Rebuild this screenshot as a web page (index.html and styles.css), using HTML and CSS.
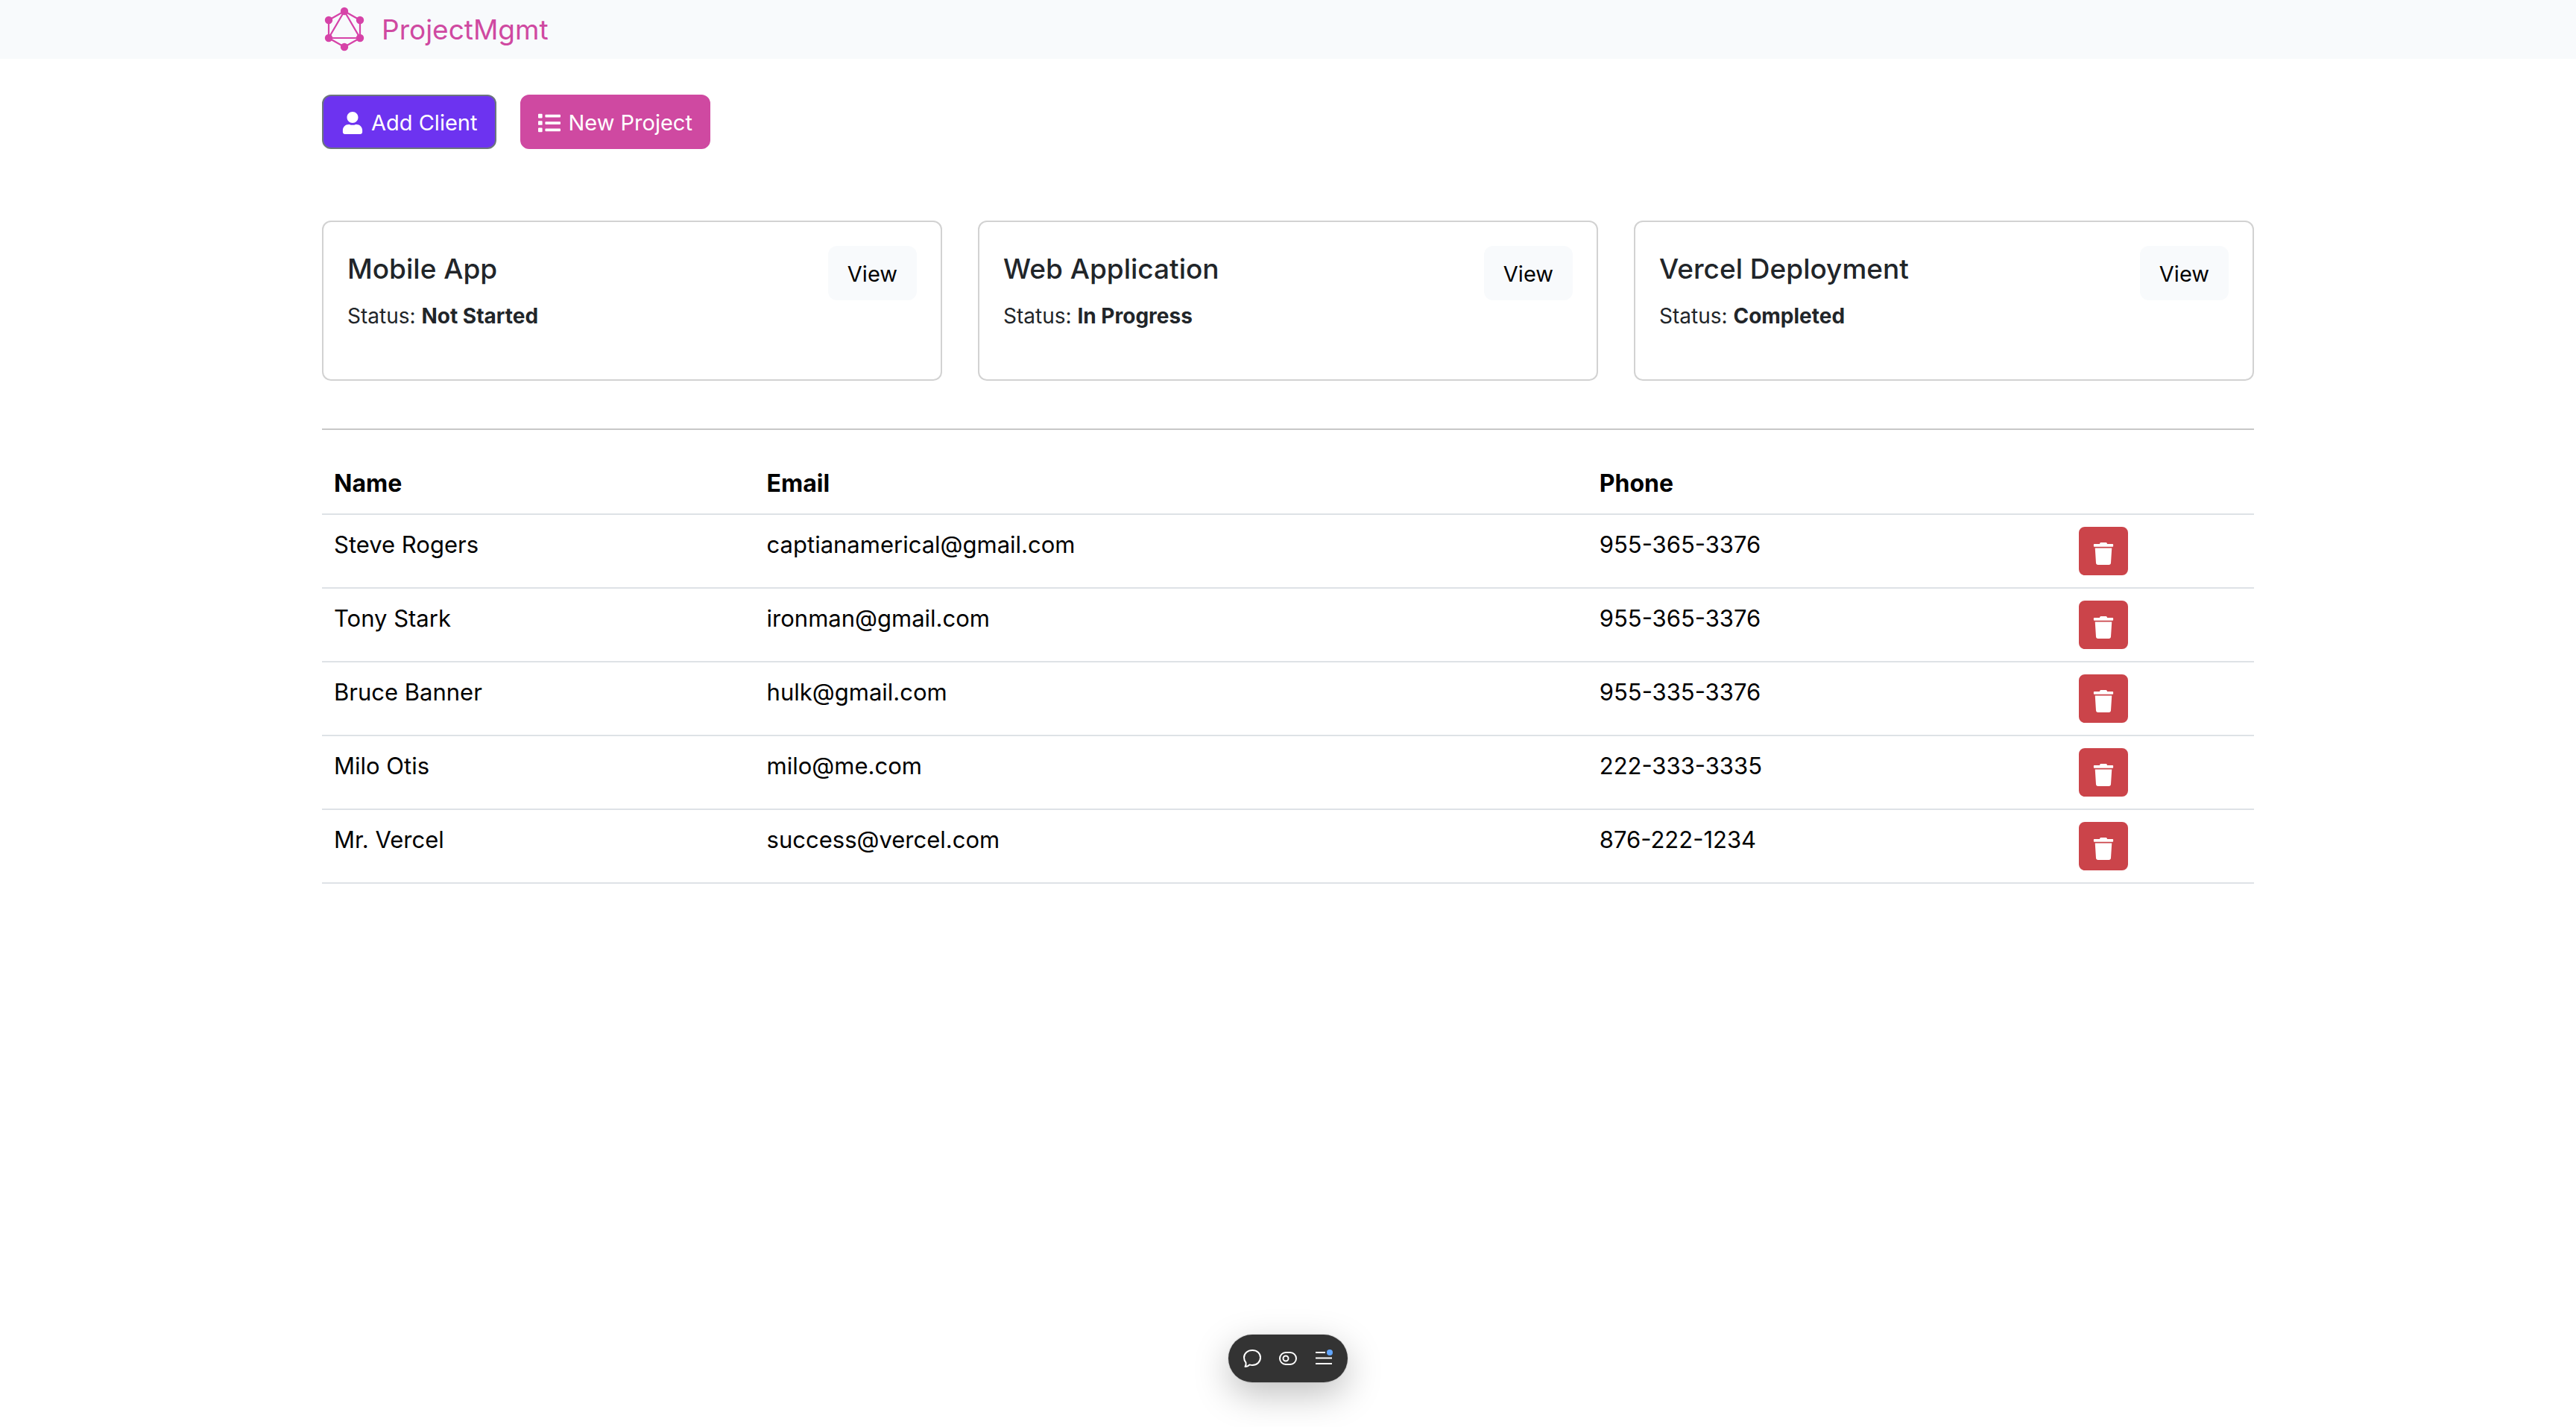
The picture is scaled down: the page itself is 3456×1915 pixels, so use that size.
FILE: index.html
```
<!DOCTYPE html>
<html lang="en">
<head>
<meta charset="utf-8">
<meta name="viewport" content="width=device-width, initial-scale=1">
<title>ProjectMgmt</title>
<link rel="stylesheet" href="styles.css">
</head>
<body>
<svg class="sprite" aria-hidden="true">
  <symbol id="icon-trash" viewBox="0 0 448 512"><path d="M432 32H312l-9.400-18.700A24 24 0 0 0 281.100 0H166.800a23.720 23.720 0 0 0-21.400 13.300L136 32H16A16 16 0 0 0 0 48v32a16 16 0 0 0 16 16h416a16 16 0 0 0 16-16V48a16 16 0 0 0-16-16zM53.200 467a48 48 0 0 0 47.900 45h245.800a48 48 0 0 0 47.900-45L416 128H32z"/></symbol>
</svg>

<nav class="navbar">
  <div class="container">
    <a class="brand" href="#">
      <svg class="brand-logo" viewBox="0 0 60 64" aria-hidden="true">
        <path d="M30 7 51 19V43L30 55 9 43V19ZM30 7 9 43H51Z" fill="none" stroke="currentColor" stroke-width="2.200"/>
        <g fill="currentColor"><circle cx="30" cy="7" r="5.200"/><circle cx="51" cy="19" r="5.200"/><circle cx="51" cy="43" r="5.200"/><circle cx="30" cy="55" r="5.200"/><circle cx="9" cy="43" r="5.200"/><circle cx="9" cy="19" r="5.200"/></g>
      </svg>
      <span>ProjectMgmt</span>
    </a>
  </div>
</nav>

<main class="container content">
  <div class="actions">
    <button class="btn btn-client" type="button">
      <svg class="icon" viewBox="0 0 448 512" aria-hidden="true"><path d="M224 256c70.700 0 128-57.300 128-128S294.700 0 224 0 96 57.300 96 128s57.300 128 128 128zm89.600 32h-16.700c-22.200 10.200-46.900 16-72.900 16s-50.600-5.800-72.900-16h-16.700C60.200 288 0 348.200 0 422.400V464c0 26.500 21.500 48 48 48h352c26.500 0 48-21.500 48-48v-41.600c0-74.200-60.200-134.400-134.400-134.400z"/></svg>
      <span>Add Client</span>
    </button>
    <button class="btn btn-project" type="button">
      <svg class="icon" viewBox="0 0 512 512" aria-hidden="true"><path d="M80 368H16a16 16 0 0 0-16 16v64a16 16 0 0 0 16 16h64a16 16 0 0 0 16-16v-64a16 16 0 0 0-16-16zm0-320H16A16 16 0 0 0 0 64v64a16 16 0 0 0 16 16h64a16 16 0 0 0 16-16V64a16 16 0 0 0-16-16zm0 160H16a16 16 0 0 0-16 16v64a16 16 0 0 0 16 16h64a16 16 0 0 0 16-16v-64a16 16 0 0 0-16-16zm416 176H176a16 16 0 0 0-16 16v32a16 16 0 0 0 16 16h320a16 16 0 0 0 16-16v-32a16 16 0 0 0-16-16zm0-320H176a16 16 0 0 0-16 16v32a16 16 0 0 0 16 16h320a16 16 0 0 0 16-16V80a16 16 0 0 0-16-16zm0 160H176a16 16 0 0 0-16 16v32a16 16 0 0 0 16 16h320a16 16 0 0 0 16-16v-32a16 16 0 0 0-16-16z"/></svg>
      <span>New Project</span>
    </button>
  </div>

  <section class="projects" aria-label="Projects">
    <article class="card">
      <div class="card-head">
        <h2 class="card-title">Mobile App</h2>
        <a class="btn btn-light" href="#">View</a>
      </div>
      <p class="status">Status: <strong>Not Started</strong></p>
    </article>
    <article class="card">
      <div class="card-head">
        <h2 class="card-title">Web Application</h2>
        <a class="btn btn-light" href="#">View</a>
      </div>
      <p class="status">Status: <strong>In Progress</strong></p>
    </article>
    <article class="card">
      <div class="card-head">
        <h2 class="card-title">Vercel Deployment</h2>
        <a class="btn btn-light" href="#">View</a>
      </div>
      <p class="status">Status: <strong>Completed</strong></p>
    </article>
  </section>

  <hr class="divider">

  <table class="clients">
    <colgroup><col class="col-name"><col class="col-email"><col class="col-phone"><col></colgroup>
    <thead>
      <tr><th scope="col">Name</th><th scope="col">Email</th><th scope="col">Phone</th><td></td></tr>
    </thead>
    <tbody>
      <tr><td>Steve Rogers</td><td>captianamerical@gmail.com</td><td>955-365-3376</td><td><button class="btn-delete" type="button" aria-label="Delete Steve Rogers"><svg class="icon"><use href="#icon-trash"/></svg></button></td></tr>
      <tr><td>Tony Stark</td><td>ironman@gmail.com</td><td>955-365-3376</td><td><button class="btn-delete" type="button" aria-label="Delete Tony Stark"><svg class="icon"><use href="#icon-trash"/></svg></button></td></tr>
      <tr><td>Bruce Banner</td><td>hulk@gmail.com</td><td>955-335-3376</td><td><button class="btn-delete" type="button" aria-label="Delete Bruce Banner"><svg class="icon"><use href="#icon-trash"/></svg></button></td></tr>
      <tr><td>Milo Otis</td><td>milo@me.com</td><td>222-333-3335</td><td><button class="btn-delete" type="button" aria-label="Delete Milo Otis"><svg class="icon"><use href="#icon-trash"/></svg></button></td></tr>
      <tr><td>Mr. Vercel</td><td>success@vercel.com</td><td>876-222-1234</td><td><button class="btn-delete" type="button" aria-label="Delete Mr. Vercel"><svg class="icon"><use href="#icon-trash"/></svg></button></td></tr>
    </tbody>
  </table>
</main>

<div class="toolbar" role="toolbar" aria-label="Preview tools">
  <button class="tool" type="button" aria-label="Comment">
    <svg viewBox="0 0 32 32" aria-hidden="true"><path d="M16.200 5C22.500 5 27 9 27 14.800S22.500 25 16.200 25C14.800 25 13.600 24.800 12.400 24.400C10.800 26.300 9 27 6.500 27C7.500 25.500 7.900 23.800 7.500 21.600C6 19.800 5 17.600 5 14.800C5 9 9.900 5 16.200 5Z" stroke-linejoin="round"/></svg>
  </button>
  <button class="tool" type="button" aria-label="Draft mode">
    <svg viewBox="0 0 32 32" aria-hidden="true"><rect x="5" y="8" width="22" height="16" rx="8"/><circle cx="13" cy="16" r="3.500"/></svg>
  </button>
  <button class="tool" type="button" aria-label="Menu">
    <svg viewBox="0 0 32 32" aria-hidden="true"><path d="M5 8H18M5 15.500H27M5 23H27"/><circle class="tool-dot" cx="24" cy="8" r="4"/></svg>
  </button>
</div>
</body>
</html>
```
FILE: styles.css
```
*,
*::before,
*::after {
  box-sizing: border-box;
}

body {
  margin: 0;
  background: #fff;
  color: #212529;
  font-family: Inter, "Liberation Sans", sans-serif;
  font-size: 31px;
  line-height: 48px;
}

.sprite {
  display: none;
}

.container {
  width: 75%;
  margin: 0 auto;
}

.navbar {
  padding: 9px 0 8px;
  background: #f8fafc;
}

.brand {
  display: flex;
  width: fit-content;
  align-items: center;
  gap: 20px;
  height: 62px;
  color: #cf49a1;
  font-size: 37px;
  text-decoration: none;
}

.brand-logo {
  width: 60px;
  height: 64px;
  color: #d643a8;
}

.content {
  padding-top: 48px;
}

.actions {
  display: flex;
  gap: 32px;
  margin-bottom: 96px;
}

.btn {
  display: inline-flex;
  align-items: center;
  gap: 10px;
  padding: 13px 24px 11px;
  border: 2px solid transparent;
  border-radius: 12px;
  font-family: inherit;
  font-size: 29px;
  line-height: 45px;
  text-decoration: none;
  cursor: pointer;
}

.icon {
  display: block;
  width: 30px;
  height: 30px;
  fill: currentColor;
}

.btn-client {
  background: #6d33f0;
  border-color: #6c757d;
  color: #fff;
}

.btn-project {
  padding-right: 22px;
  padding-left: 22px;
  background: #cf49a1;
  border-color: #cf49a1;
  color: #fff;
}

.btn-light {
  background: #f8fafc;
  color: #000;
}

.projects {
  display: grid;
  grid-template-columns: repeat(3, 1fr);
  gap: 48px;
}

.card {
  padding: 32px;
  border: 2px solid #d2d2d2;
  border-radius: 12px;
}

.card-head {
  display: flex;
  align-items: center;
  justify-content: space-between;
}

.card-title {
  margin: 0 0 12px;
  font-size: 37px;
  font-weight: 500;
}

.status {
  margin: 0 0 32px;
  font-size: 28px;
  line-height: 42px;
}

.divider {
  margin: 64px 0 32px;
  border: 0;
  border-top: 2px solid #c8c8c8;
}

.clients {
  width: 100%;
  table-layout: fixed;
  border-collapse: separate;
  border-spacing: 0;
  color: #000;
}

.col-name {
  width: 22.4%;
}

.col-email {
  width: 43.1%;
}

.col-phone {
  width: 24.8%;
}

.clients th,
.clients td {
  padding: 16px;
  border-bottom: 2px solid #dee2e6;
  text-align: left;
  vertical-align: top;
}

.clients th {
  font-size: 32px;
  font-weight: 700;
}

.btn-delete {
  display: block;
  padding: 19px 16px 12px;
  border: 2px solid #cb444a;
  border-radius: 8px;
  background: #cb444a;
  color: #fff;
  cursor: pointer;
}

.toolbar {
  position: fixed;
  bottom: 60px;
  left: 50%;
  display: flex;
  gap: 16px;
  padding: 16px;
  border-radius: 32px;
  background: #333;
  box-shadow: 0 0 0 1px rgba(0, 0, 0, 0.1), 0 16px 48px rgba(0, 0, 0, 0.25);
  transform: translateX(-50%);
}

.tool {
  width: 32px;
  height: 32px;
  padding: 0;
  border: 0;
  background: none;
  cursor: pointer;
}

.tool svg {
  display: block;
  width: 32px;
  height: 32px;
  fill: none;
  stroke: #fff;
  stroke-width: 2;
}

.tool .tool-dot {
  fill: #62a6ff;
  stroke: none;
}
```
